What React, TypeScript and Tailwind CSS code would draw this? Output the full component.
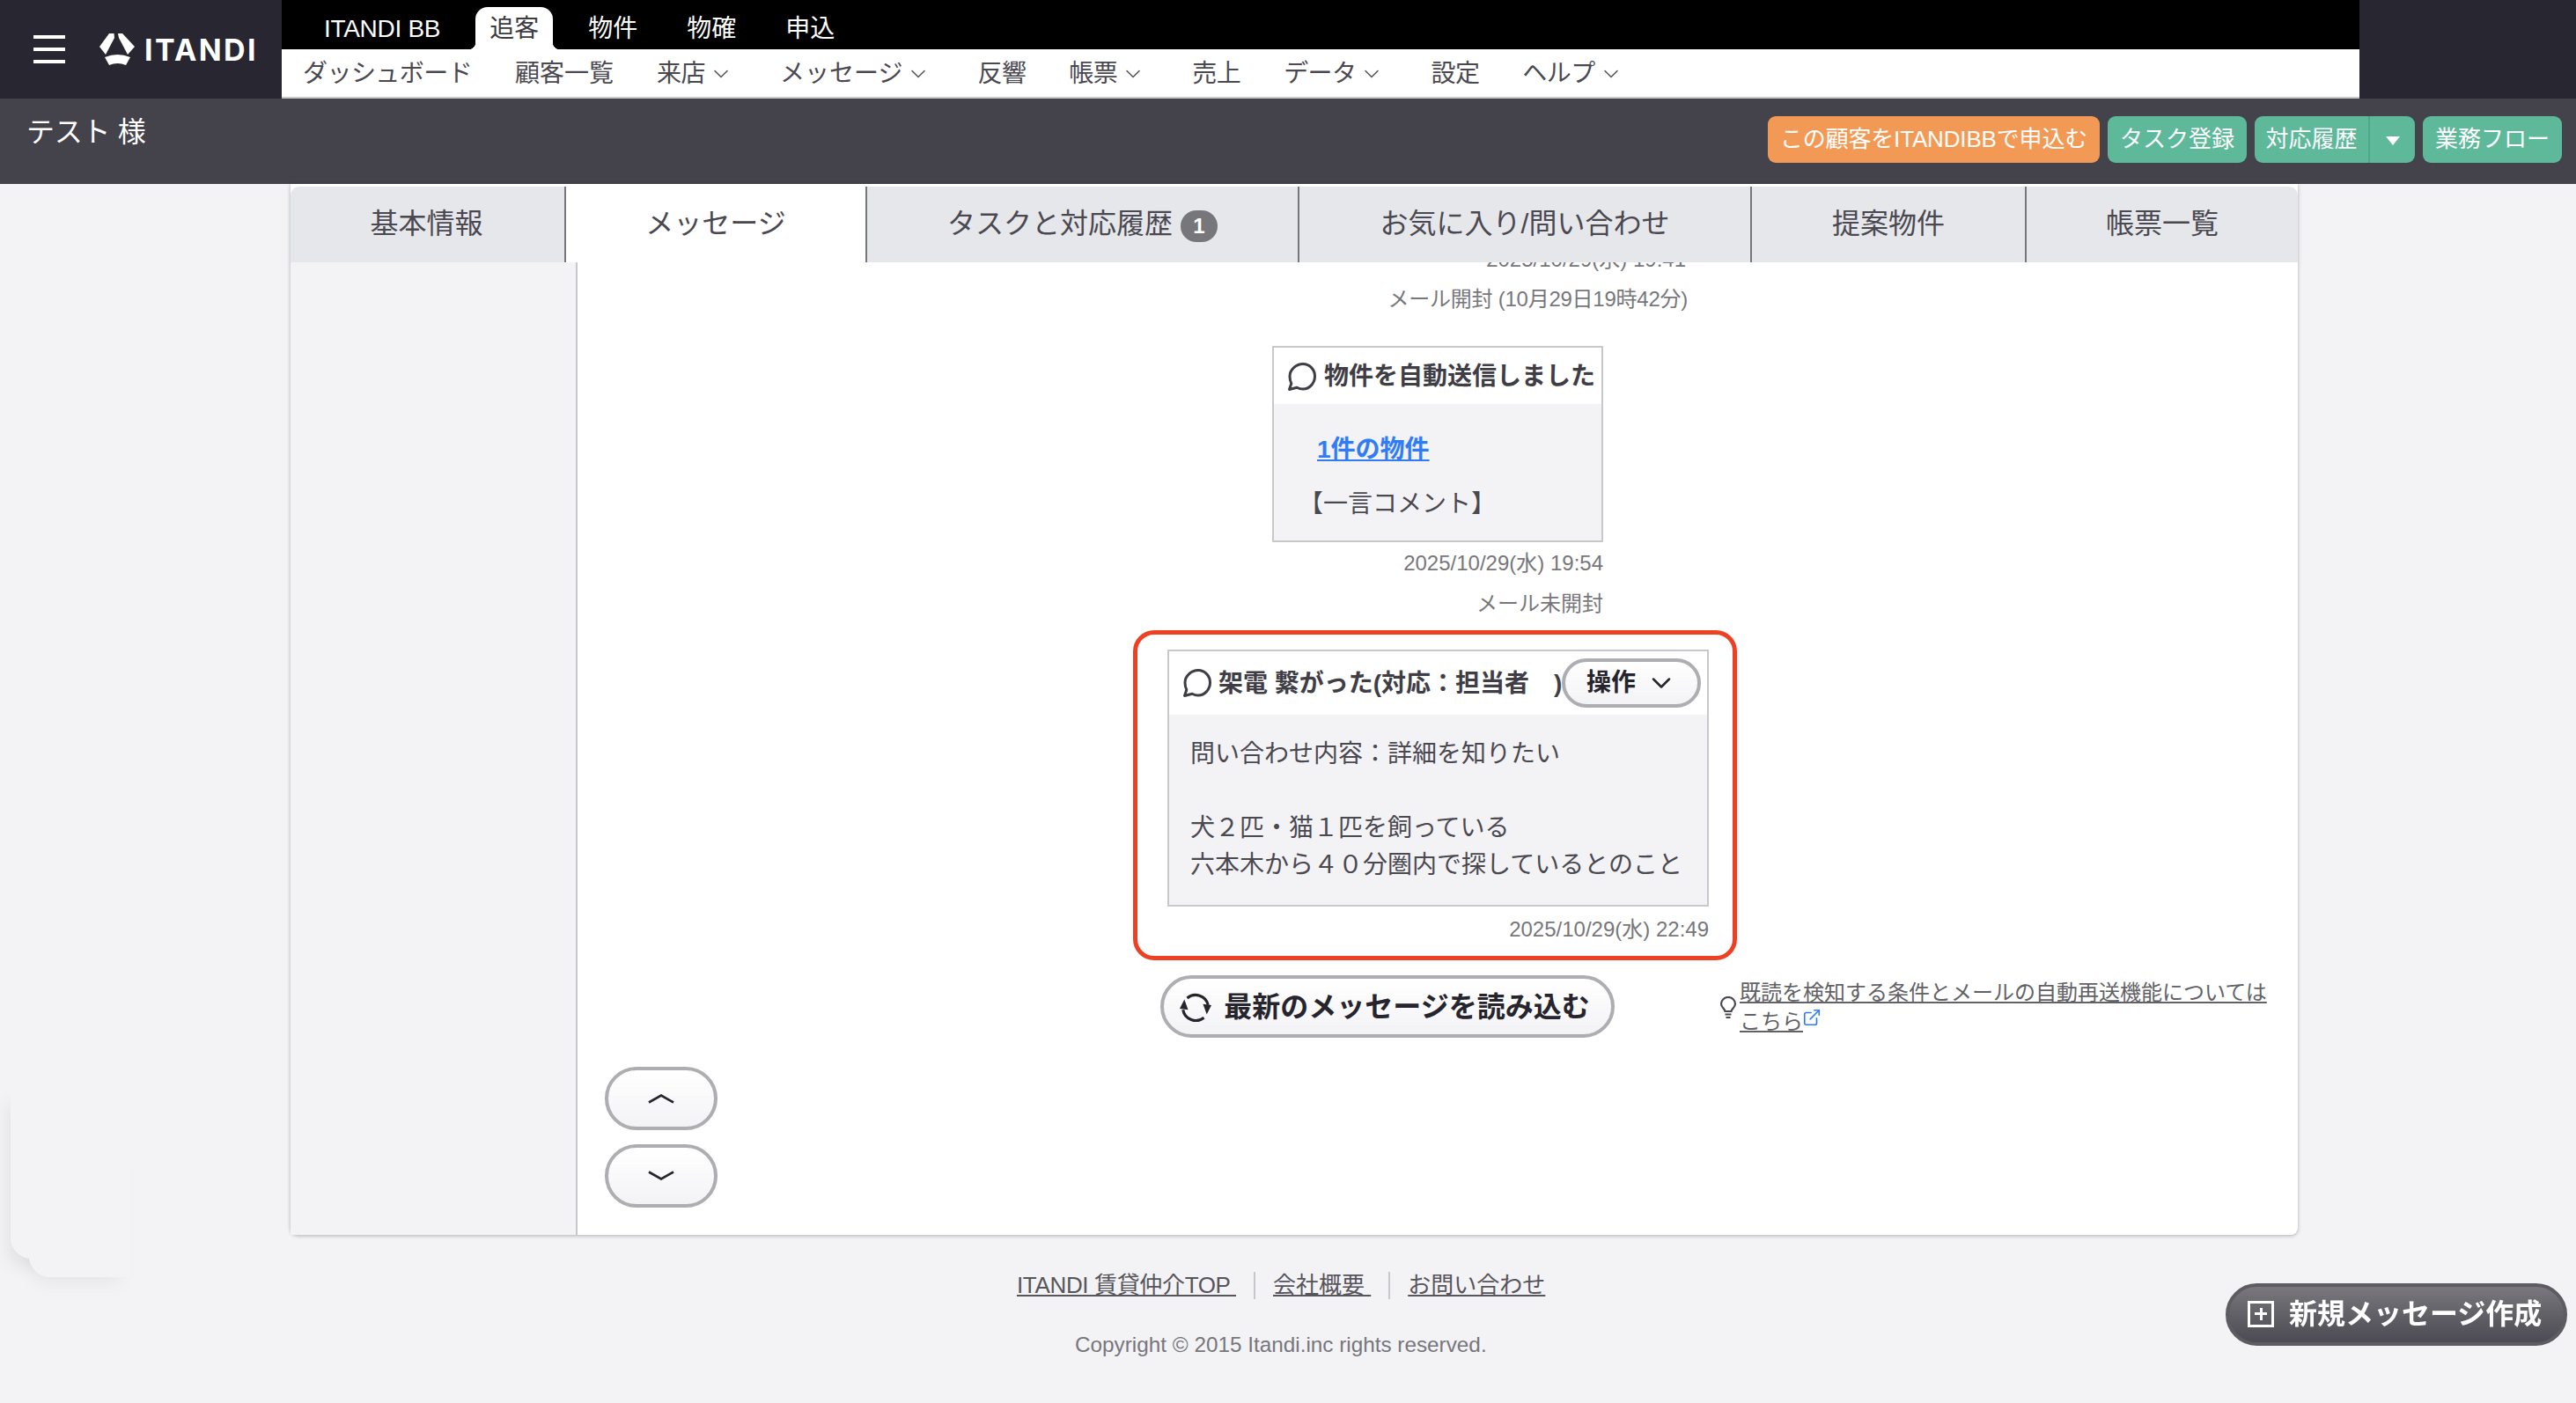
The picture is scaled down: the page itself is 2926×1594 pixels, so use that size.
import { ChevronDown, ExternalLink } from "lucide-react";

const topTabs = ["物件", "物確", "申込"];

const menuItems = [
  { label: "ダッシュボード", arrow: false, cls: "tracking-[-0.02em]" },
  { label: "顧客一覧", arrow: false, cls: "" },
  { label: "来店", arrow: true, cls: "tracking-[-0.02em]" },
  { label: "メッセージ", arrow: true, cls: "" },
  { label: "反響", arrow: false, cls: "tracking-[-0.02em]" },
  { label: "帳票", arrow: true, cls: "tracking-[-0.02em]" },
  { label: "売上", arrow: false, cls: "tracking-[-0.02em]" },
  { label: "データ", arrow: true, cls: "tracking-[-0.02em]" },
  { label: "設定", arrow: false, cls: "tracking-[-0.02em]" },
  { label: "ヘルプ", arrow: true, cls: "tracking-[-0.02em]" },
];

function ChatIcon() {
  return (
    <svg width="34" height="34" viewBox="0 0 34 34" fill="none" stroke="#3f3d45" strokeWidth="3" className="shrink-0">
      <path d="M18 2.500c7.500 0 13.500 6.300 13.500 14S25.500 31 18 31c-2.500 0-4.800-.6-6.800-1.700L2.500 31.500l2.300-6.800C3.700 22.500 3 19.500 3 16.500 3 8.800 10.500 2.500 18 2.500z" strokeLinejoin="round" />
    </svg>
  );
}

function ItandiLogo() {
  return (
    <svg width="44" height="38" viewBox="0 0 44 38" fill="#ffffff" className="shrink-0">
      <path d="M12 1h5.500l.5 5L8 25 1 16z" />
      <path d="M22 1h5l14 15-8 9L23 6z" />
      <path d="M7 28q14.500-6 29 0l-5 9q-9.500-4-19 0z" />
    </svg>
  );
}

function ReloadIcon() {
  return (
    <svg width="36" height="36" viewBox="0 0 34 34" fill="none" className="shrink-0">
      <path d="M8 7.500A14 14 0 0 1 30.500 15" stroke="#26242c" strokeWidth="3" />
      <path d="M26 28.500A14 14 0 0 1 3.500 20" stroke="#26242c" strokeWidth="3" />
      <path d="M25 14l9 1-5 10z" fill="#26242c" />
      <path d="M9 20l-9-1 5-10z" fill="#26242c" />
    </svg>
  );
}

function BulbIcon() {
  return (
    <svg width="20" height="26" viewBox="0 0 20 26" fill="none" stroke="#4a4850" strokeWidth="2.200" className="mt-[2px] shrink-0">
      <path d="M6.500 17C6 14 2 12.500 2 8.500a8 7.500 0 0 1 16 0c0 4-4 5.500-4.500 8.500z" />
      <path d="M6.500 20.500h7M7.500 24h5" />
    </svg>
  );
}

function App() {
  return (
    <div className="relative h-[1594px] w-full overflow-hidden bg-[#f3f3f6] font-['Liberation_Sans','Noto_Sans_CJK_JP',sans-serif] text-[#4a4850]">
      {/* Faint leftover panel at lower left */}
      <div className="absolute left-[12px] top-[1230px] h-[200px] w-[130px] rounded-bl-[24px] shadow-[-10px_16px_20px_-8px_rgba(0,0,0,0.08)]" />
      <div className="absolute left-[33px] top-[1300px] h-[151px] w-[115px] rounded-bl-[24px] shadow-[-4px_14px_22px_-8px_rgba(0,0,0,0.06)]" />
      <div className="absolute left-[12px] top-[1230px] h-[200px] w-[130px] rounded-bl-[24px] bg-[#f3f3f6]" />
      <div className="absolute left-[33px] top-[1300px] h-[151px] w-[115px] rounded-bl-[24px] bg-[#f3f3f6]" />

      {/* Header */}
      <header className="relative flex h-[112px] bg-[#282630]">
        <div className="flex w-[320px] items-center pl-[38px]">
          <div className="flex h-[32px] w-[36px] flex-col justify-between">
            <span className="h-[4px] bg-white" />
            <span className="h-[4px] bg-white" />
            <span className="h-[4px] bg-white" />
          </div>
          <div className="ml-[38px] flex items-center">
            <ItandiLogo />
            <span className="ml-[8px] mt-[2px] font-['Inter',sans-serif] text-[34px] font-bold leading-none tracking-[0.07em] text-white">ITANDI</span>
          </div>
        </div>
        <div className="flex w-[2360px] flex-col">
          <nav className="flex h-[56px] items-end bg-black pl-[48px] text-[28px] text-white">
            <span className="mb-[2px] mr-[40px] tracking-[-0.3px]">ITANDI BB</span>
            <span className="relative flex h-[48px] w-[88px] items-center justify-center rounded-t-[14px] bg-white pt-[2px] text-[#3c3a42]">
              追客
              <span className="absolute bottom-0 left-[-8px] h-[8px] w-[8px] bg-[radial-gradient(circle_at_0_0,#000_8px,#fff_8.5px)]" />
              <span className="absolute bottom-0 right-[-8px] h-[8px] w-[8px] bg-[radial-gradient(circle_at_100%_0,#000_8px,#fff_8.5px)]" />
            </span>
            <div className="ml-[40px] flex gap-[56px]">
              {topTabs.map((t) => (
                <span key={t} className="mb-[2px]">{t}</span>
              ))}
            </div>
          </nav>
          <nav className="flex h-[56px] items-center gap-[49px] border-b-2 border-[#c8c8cc] bg-white pl-[24px] pt-[2px] text-[28px] leading-none text-[#4a4850]">
            {menuItems.map((m) => (
              <span key={m.label} className={`flex items-center ${m.cls}`}>
                {m.label}
                {m.arrow && <ChevronDown size={28} strokeWidth={1.4} className="ml-[4px] mr-[4px] text-[#5a585f]" />}
              </span>
            ))}
          </nav>
        </div>
        <div className="flex-1" />
      </header>

      {/* Customer bar */}
      <div className="flex h-[97px] items-start justify-between bg-[#44424b] pl-[30px] pr-[16px]">
        <p className="mt-[16px] text-[32px] leading-[44px] tracking-[-0.3px] text-white">テスト 様</p>
        <div className="mt-[20px] flex gap-[9px] text-[26px] text-white">
          <button className="flex h-[53px] w-[377px] items-center justify-center rounded-[9px] bg-[#f29a55] tracking-[-0.17px]">この顧客をITANDIBBで申込む</button>
          <button className="flex h-[53px] w-[158px] items-center justify-center rounded-[9px] bg-[#5eb89a]">タスク登録</button>
          <div className="flex h-[53px] w-[182px] overflow-hidden rounded-[9px] bg-[#5eb89a]">
            <span className="flex w-[131px] items-center justify-center border-r-2 border-[#4fa689]">対応履歴</span>
            <span className="flex flex-1 items-center justify-center">
              <span className="mt-[3px] h-0 w-0 border-x-[8px] border-t-[10px] border-x-transparent border-t-white" />
            </span>
          </div>
          <button className="flex h-[53px] w-[158px] items-center justify-center rounded-[9px] bg-[#5eb89a]">業務フロー</button>
        </div>
      </div>

      {/* Card */}
      <div className="relative ml-[330px] w-[2280px] rounded-b-[8px] bg-white pt-[3px] shadow-[0_1px_4px_rgba(0,0,0,0.28)]">
        <div className="flex h-[86px] text-[32px] leading-none text-[#4a4850]">
          <div className="flex w-[313px] items-center justify-center rounded-tl-[10px] border-r-2 border-[#77777b] bg-[#e6e7eb] pb-[2px] pr-[2px]">基本情報</div>
          <div className="flex w-[342px] items-center justify-center border-r-2 border-[#77777b] bg-white pb-[2px]">メッセージ</div>
          <div className="flex w-[491px] items-center justify-center border-r-2 border-[#77777b] bg-[#e6e7eb] pb-[2px]">
            タスクと対応履歴
            <span className="ml-[9px] mt-[6px] flex h-[36px] w-[42px] items-center justify-center rounded-full bg-[#77777b] text-[24px] font-bold text-white">1</span>
          </div>
          <div className="flex w-[514px] items-center justify-center border-r-2 border-[#77777b] bg-[#e6e7eb] pb-[2px]">お気に入り/問い合わせ</div>
          <div className="flex w-[312px] items-center justify-center border-r-2 border-[#77777b] bg-[#e6e7eb] pb-[2px]">提案物件</div>
          <div className="flex w-[308px] items-center justify-center rounded-tr-[10px] bg-[#e6e7eb] pb-[2px]">帳票一覧</div>
        </div>

        <div className="flex h-[1105px]">
          <aside className="w-[326px] rounded-bl-[2px] border-r-2 border-[#c8c8cc] bg-[#f3f3f6]" />
          <main className="min-w-0 flex-1 overflow-hidden">
            {/* Sent property message */}
            <div className="ml-[432px] mt-[-19px] w-[829px] text-right text-[24px] leading-[32px] text-[#77777b]">
              <p className="pr-[2px]">2025/10/29(水) 19:41</p>
              <p className="mt-[13px] tracking-[-0.25px]">メール開封 (10月29日19時42分)</p>
            </div>
            <div className="ml-[789px] mt-[37px] w-[376px]">
              <div className="border-2 border-[#c8c8cc] bg-[#f3f3f6]">
                <div className="flex h-[64px] items-center gap-[8px] bg-white pl-[15px] pt-[2px] text-[28px] font-bold leading-none text-[#3f3d45]">
                  <ChatIcon />
                  物件を自動送信しました
                </div>
                <div className="h-[155px] pl-[28px] pt-[31px] text-[28px] leading-[42px]">
                  <a className="ml-[21px] block font-bold text-[#2f7cf6] underline">1件の物件</a>
                  <p className="mt-[20px]">【一言コメント】</p>
                </div>
              </div>
              <div className="text-right text-[24px] text-[#77777b]">
                <p className="mt-[8px] leading-[32px]">2025/10/29(水) 19:54</p>
                <p className="mt-[14px] leading-[32px]">メール未開封</p>
              </div>
            </div>

            {/* Highlighted call log */}
            <div className="ml-[631px] mt-[14px] box-border h-[375px] w-[686px] rounded-[24px] border-[5px] border-[#ee4123] pl-[34px] pt-[17px]">
              <div className="w-[615px] border-2 border-[#c8c8cc] bg-[#f3f3f6]">
                <div className="flex h-[72px] items-center bg-white pl-[15px] text-[28px] font-bold leading-none text-[#3f3d45]">
                  <ChatIcon />
                  <span className="ml-[7px] mt-[2px] whitespace-pre">架電 繋がった(対応：担当者　)</span>
                  <button className="flex h-[56px] w-[158px] items-center justify-center gap-[11px] rounded-full border-[4px] border-[#aeaeb2] bg-gradient-to-b from-white to-[#f3f3f6] text-[#26242c]">
                    操作
                    <ChevronDown size={36} strokeWidth={1.7} />
                  </button>
                </div>
                <div className="h-[216px] whitespace-pre-line pl-[24px] pt-[24px] text-[28px] leading-[42px]">
                  <p>問い合わせ内容：詳細を知りたい</p>
                  <p className="mt-[42px]">犬２匹・猫１匹を飼っている</p>
                  <p>六本木から４０分圏内で探しているとのこと</p>
                </div>
              </div>
              <p className="mt-[10px] w-[615px] text-right text-[24px] leading-[32px] text-[#77777b]">2025/10/29(水) 22:49</p>
            </div>

            {/* Reload + help */}
            <div className="ml-[662px] mt-[17px] flex items-center">
              <button className="flex h-[71px] w-[516px] items-center justify-center gap-[14px] rounded-full border-[4px] border-[#aeaeb2] bg-gradient-to-b from-white to-[#f3f3f6] pr-[6px] text-[32px] font-bold leading-none text-[#26242c]">
                <ReloadIcon />
                最新のメッセージを読み込む
              </button>
              <div className="ml-[119px] flex items-center">
                <BulbIcon />
                <a className="ml-[3px] w-[605px] text-[24px] leading-[33px] text-[#626266] underline">
                  既読を検知する条件とメールの自動再送機能についてはこちら
                  <ExternalLink size={22} strokeWidth={1.8} className="ml-[-1px] inline-block align-[2px] text-[#2f7cf6]" />
                </a>
              </div>
            </div>

            {/* Scroll buttons */}
            <div className="ml-[31px] mt-[33px] flex w-[128px] flex-col gap-[16px]">
              <button className="flex h-[72px] items-center justify-center rounded-full border-[4px] border-[#aeaeb2] bg-gradient-to-b from-white to-[#f3f3f6]">
                <svg width="30" height="12" viewBox="0 0 30 12" fill="none" stroke="#26242c" strokeWidth="2.600">
                  <path d="M1 10.500 15 2.500l14 8" />
                </svg>
              </button>
              <button className="flex h-[72px] items-center justify-center rounded-full border-[4px] border-[#aeaeb2] bg-gradient-to-b from-white to-[#f3f3f6]">
                <svg width="30" height="12" viewBox="0 0 30 12" fill="none" stroke="#26242c" strokeWidth="2.600">
                  <path d="M1 1.500l14 8 14-8" />
                </svg>
              </button>
            </div>
          </main>
        </div>
      </div>

      {/* Footer */}
      <footer className="mt-[41px]">
        <div className="ml-[1155px] flex items-center text-[26px] leading-[32px] text-[#57555c]">
          <a className="whitespace-pre tracking-[-0.35px] underline">ITANDI 賃貸仲介TOP </a>
          <span className="mx-[20px] h-[31px] w-[2px] bg-[#c8c8cc]" />
          <a className="whitespace-pre underline">会社概要 </a>
          <span className="mx-[20px] h-[31px] w-[2px] bg-[#c8c8cc]" />
          <a className="underline">お問い合わせ</a>
        </div>
        <p className="ml-[1221px] mt-[36px] text-[24.3px] leading-[32px] text-[#77777b]">Copyright © 2015 Itandi.inc rights reserved.</p>
      </footer>

      {/* New message button */}
      <button className="fixed bottom-[65px] right-[10px] flex h-[71px] w-[388px] items-center rounded-full border-[4px] border-[#5e5c63] bg-gradient-to-b from-[#7a787e] to-[#4c4a52] pb-[2px] pl-[21px] text-[32px] font-bold leading-none text-white">
        <span className="relative h-[30px] w-[30px] shrink-0 border-[3px] border-white">
          <span className="absolute left-[5px] top-[10.500px] h-[3px] w-[14px] bg-white" />
          <span className="absolute left-[10.500px] top-[5px] h-[14px] w-[3px] bg-white" />
        </span>
        <span className="ml-[17px]">新規メッセージ作成</span>
      </button>
    </div>
  );
}

export default App;
